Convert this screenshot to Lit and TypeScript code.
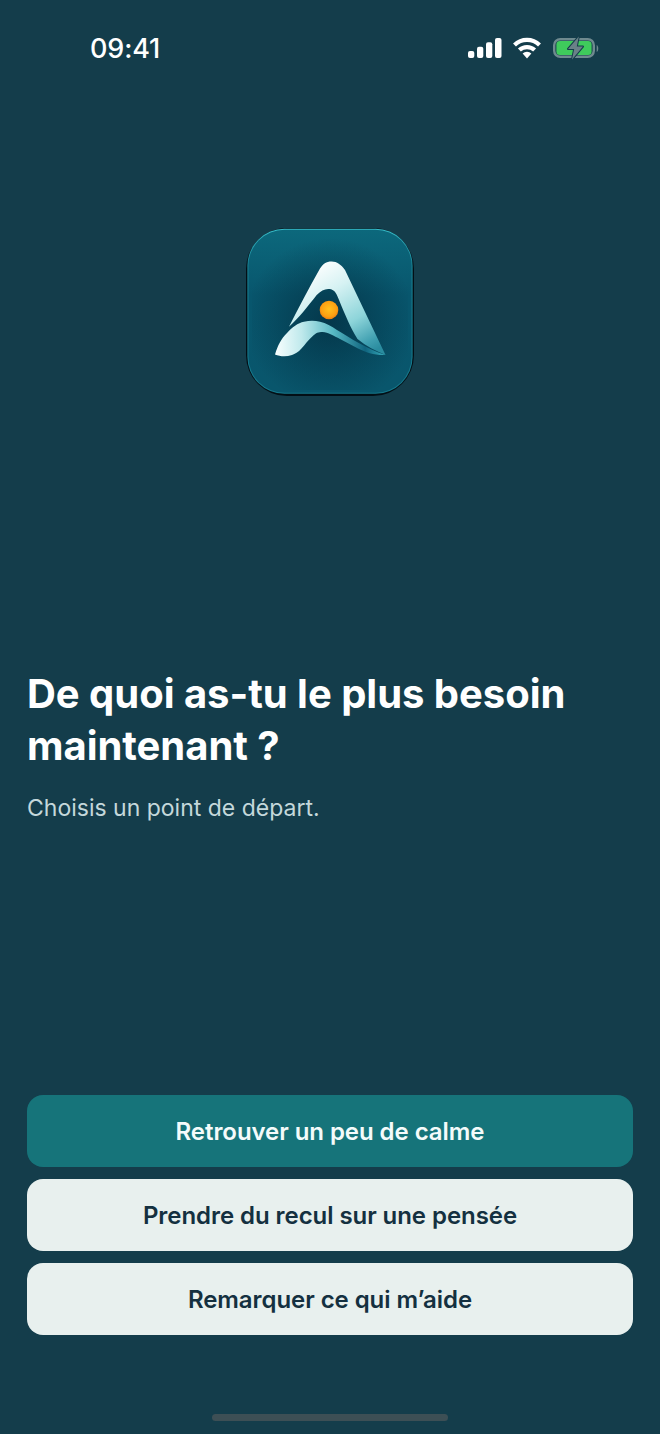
import { LitElement, html, css, svg } from "lit";
import { customElement } from "lit/decorators.js";

const logo = svg`<svg class="logo-svg" viewBox="0 0 168 168" width="168" height="168">
  <defs>
    <linearGradient id="bg" x1="0" y1="0" x2="0" y2="1">
      <stop offset="0" stop-color="#0c687c"/><stop offset="0.4" stop-color="#08566d"/><stop offset="1" stop-color="#09566c"/>
    </linearGradient>
    <radialGradient id="glow" cx="0.5" cy="0.55" r="0.55">
      <stop offset="0" stop-color="#022a3c" stop-opacity="0.7"/><stop offset="1" stop-color="#022a3c" stop-opacity="0"/>
    </radialGradient>
    <linearGradient id="edge" x1="0" y1="0" x2="0" y2="1">
      <stop offset="0" stop-color="#37bdca"/><stop offset="0.2" stop-color="#1a8596"/><stop offset="1" stop-color="#14778a"/>
    </linearGradient>
    <linearGradient id="a1" gradientUnits="userSpaceOnUse" x1="70" y1="35" x2="125" y2="125">
      <stop offset="0" stop-color="#ffffff"/><stop offset="0.3" stop-color="#d6f2f3"/><stop offset="0.65" stop-color="#8ed5da"/><stop offset="0.9" stop-color="#3f9fb0"/><stop offset="1" stop-color="#2a8c9f"/>
    </linearGradient>
    <linearGradient id="a2" gradientUnits="userSpaceOnUse" x1="30" y1="125" x2="135" y2="122">
      <stop offset="0" stop-color="#f7fefe"/><stop offset="0.25" stop-color="#bfe9ec"/><stop offset="0.55" stop-color="#57b9c4"/><stop offset="0.85" stop-color="#10657f"/><stop offset="1" stop-color="#2f9eb0"/>
    </linearGradient>
    <radialGradient id="sun" cx="0.5" cy="0.45" r="0.55">
      <stop offset="0" stop-color="#ffc01f"/><stop offset="0.75" stop-color="#fb9f12"/><stop offset="1" stop-color="#ea7d10"/>
    </radialGradient>
  </defs>
  <rect x="0" y="0" width="168" height="168" rx="41" fill="#030f16"/>
  <rect x="1.4" y="0.8" width="165.2" height="165" rx="37" fill="url(#edge)"/>
  <rect x="2.4" y="1.8" width="163.2" height="163" rx="36" fill="url(#bg)"/>
  <rect x="6" y="10" width="156" height="152" fill="url(#glow)"/>
  <path d="M85.7 33.5 C 80 33.5 77 36 74 40.5 C 63 60 53 79 43 98.7 C 53 90 62 78 70.7 67 C 75 62.5 79 60.5 83.5 61 C 88 61.5 90.5 65 92.3 70.3 C 95.5 78 99 86.5 102.3 93.7 C 105 99.5 108 105.5 111.5 111 C 120 118 130 123 139.5 127 L 99 42 C 95 36.5 91 33.5 85.7 33.5 Z" fill="url(#a1)"/>
  <path d="M29 126.5 C 32 117 35 111 41 105 C 46 99 52 95 58 93.7 C 64 92.4 69 92.6 74 93.7 C 80 95 85.5 98 91 102 C 104 110 120 120.5 139.5 127 C 129 127.5 120 124.5 112 120.5 C 106 117.5 100 114 94 111 C 88 108 82 104 76.7 104 C 72 104 70 105 67.3 107.5 C 62 112 59 117 55.7 120.3 C 52 124.5 49 126 46 127 C 40 129 34 128.5 29 126.5 Z" fill="url(#a2)"/>
  <circle cx="83" cy="82" r="9.3" fill="url(#sun)"/>
</svg>`;

@customElement("app-root")
export class AppRoot extends LitElement {
  static styles = css`
    :host {
      display: flex;
      flex-direction: column;
      width: 660px;
      height: 1434px;
      background: #143d4b;
      color: #fff;
      font-family: Inter, "Liberation Sans", sans-serif;
      box-sizing: border-box;
    }
    .status {
      display: flex;
      align-items: center;
      justify-content: space-between;
      height: 96px;
      padding: 0 61px 0 90px;
      box-sizing: border-box;
    }
    .time { font-size: 27px; font-weight: 500; letter-spacing: -0.15px; line-height: 1; }
    .status-icons { display: flex; align-items: center; }
    .status-icons svg { display: block; }
    .logo-wrap { display: flex; justify-content: center; padding-top: 132px; }
    .logo-svg { display: block; }
    .copy { padding: 272px 27px 0; }
    h1 { margin: 0; font-size: 40px; line-height: 52px; font-weight: 700; letter-spacing: -0.03px; }
    p { margin: 20px 0 0; font-size: 23px; line-height: 32px; color: #c4d8db; font-weight: 400; }
    .actions { margin-top: auto; padding: 0 27px; display: flex; flex-direction: column; gap: 12px; }
    .btn {
      height: 72px; border: 0; border-radius: 16px; background: #e8f0ee; color: #143040;
      font: 600 24px Inter, "Liberation Sans", sans-serif; letter-spacing: -0.06px; padding: 0;
    }
    .btn.primary { background: #16747a; color: #f4fbfb; }
    .home { height: 99px; display: flex; align-items: flex-end; justify-content: center; padding-bottom: 13px; box-sizing: border-box; }
    .home i { display: block; width: 236px; height: 7px; border-radius: 4px; background: #3d4f55; }
  `;

  render() {
    return html`
      <div class="status">
        <span class="time">09:41</span>
        <div class="status-icons">
          <svg width="131" height="26" viewBox="0 0 131 26">
            <g fill="#fff">
              <rect x="0" y="16" width="6.3" height="7" rx="2"/>
              <rect x="9" y="11.7" width="6.3" height="11.3" rx="2"/>
              <rect x="18" y="7.3" width="6.3" height="15.7" rx="2"/>
              <rect x="27" y="3" width="6.5" height="20" rx="2"/>
              <path d="M59 23.5 L 54.6 18.6 A 6.4 6.4 0 0 1 63.4 18.6 Z"/>
            </g>
            <g fill="none" stroke="#fff" stroke-width="4.2">
              <path d="M46.5 10 A 18 18 0 0 1 71.5 10"/>
              <path d="M51.4 15.1 A 11 11 0 0 1 66.6 15.1"/>
            </g>
            <rect x="86.2" y="4.2" width="39.6" height="17.6" rx="6" fill="none" stroke="#6f8a8f" stroke-width="2.4"/>
            <rect x="88.4" y="6" width="35.2" height="14" rx="3.5" fill="#3fcb5c"/>
            <path d="M128.7 10 C 130.8 11 130.8 16 128.7 17 Z" fill="#6f8a8f"/>
            <path d="M110.8 1.5 L 100 14 H 106.2 L 104 24.5 L 115 11.5 H 108.8 Z" fill="#6a8188" stroke="#143d4b" stroke-width="2" stroke-linejoin="round" paint-order="stroke"/>
          </svg>
        </div>
      </div>
      <div class="logo-wrap">${logo}</div>
      <div class="copy">
        <h1>De quoi as-tu le plus besoin maintenant ?</h1>
        <p>Choisis un point de départ.</p>
      </div>
      <div class="actions">
        <button class="btn primary">Retrouver un peu de calme</button>
        <button class="btn">Prendre du recul sur une pensée</button>
        <button class="btn">Remarquer ce qui m’aide</button>
      </div>
      <div class="home"><i></i></div>
    `;
  }
}
